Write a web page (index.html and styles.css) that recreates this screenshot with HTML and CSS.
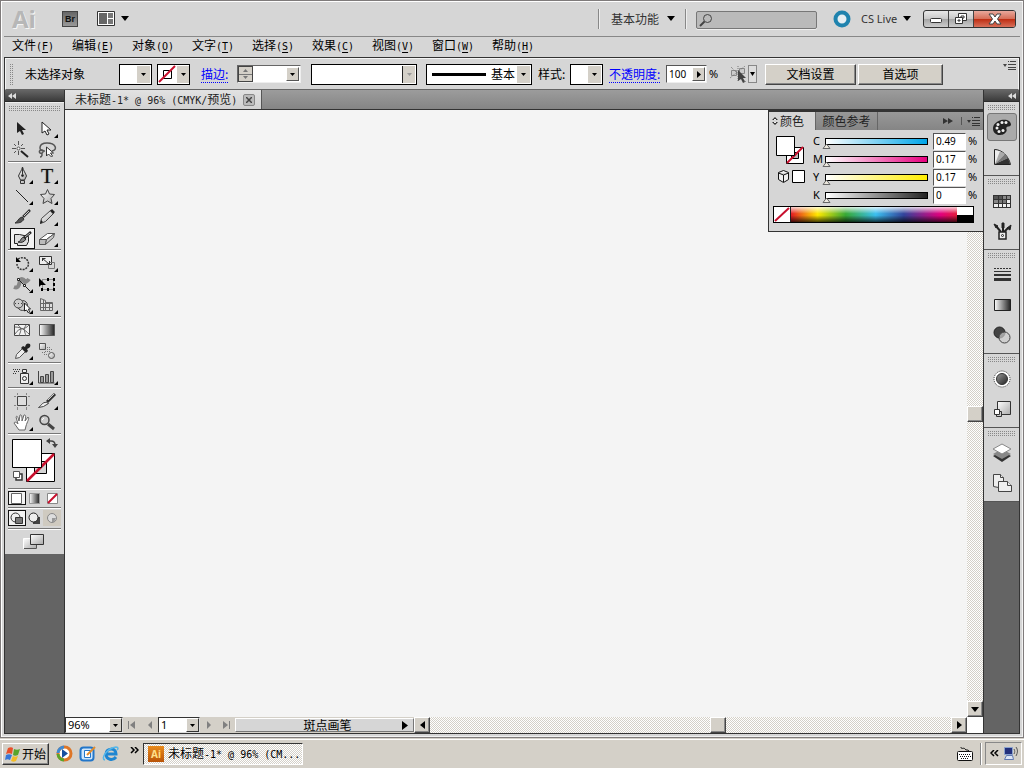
FILE: index.html
```html
<!DOCTYPE html>
<html lang="zh-CN">
<head>
<meta charset="utf-8">
<title>未标题-1* @ 96% (CMYK/预览)</title>
<link rel="stylesheet" href="styles.css">
</head>
<body>
<svg class="defs" aria-hidden="true">
  <defs>
    <linearGradient id="steel" x1="0" y1="0" x2="1" y2="1"><stop offset="0" stop-color="#fff"/><stop offset="1" stop-color="#aaa"/></linearGradient>
    <linearGradient id="dark" x1="0" y1="0" x2="1" y2="1"><stop offset="0" stop-color="#999"/><stop offset="1" stop-color="#222"/></linearGradient>
    <linearGradient id="fade"><stop offset="0" stop-color="#fff"/><stop offset="1" stop-color="#222"/></linearGradient>
    <symbol id="corner" viewBox="0 0 25 21"><path d="M23 15v4h-4z"/></symbol>
    <symbol id="pointer" viewBox="0 0 25 21"><path d="M7 3v11l3-2 2 4 2-1-2-4h4z"/></symbol>
    <symbol id="down" viewBox="0 0 8 5"><path d="M0 0h8L4 5z"/></symbol>
    <symbol id="small" viewBox="0 0 5 3"><path d="M0 0h5L2.500 3z"/></symbol>
    <symbol id="rewind" viewBox="0 0 8 6"><path d="M4 0v6L0 3zM8 0v6L4 3z"/></symbol>
    <symbol id="list" viewBox="0 0 13 9"><path d="M0 3h4L2 6zM5 0h1v1H5zM7 0h6v1H7zM5 3h8v1H5zM5 6h8v1H5zM5 8h8v1H5z"/></symbol>
  </defs>
</svg>
<main class="window">
  <header class="titlebar">
    <span class="logo">Ai</span>
    <button class="bridge">Br</button>
    <button class="plain arrange" aria-label="排列文档"><svg width="18" height="15"><path fill="#fff" stroke="#333" d="M.5.5h17v14H.5z"/><path fill="#666" d="M2 2h8v11H2z"/><path fill="#777" d="M11 2h5v5h-5zM11 8h5v5h-5z"/></svg><svg width="8" height="5"><use href="#down"/></svg></button>
    <span class="spring"></span>
    <i class="rule"></i>
    <button class="plain workspace-name">基本功能 <svg width="8" height="5"><use href="#down"/></svg></button>
    <i class="rule"></i>
    <label class="search"><svg width="14" height="14" fill="none" stroke="#444"><circle cx="8.500" cy="5.500" r="4"/><path stroke-width="2" d="M5.500 8.500L1 13"/></svg><input type="search" aria-label="搜索"></label>
    <button class="plain live"><svg width="18" height="18"><circle cx="9" cy="9" r="6.500" fill="#e6eff3" stroke="#1f83ae" stroke-width="4"/></svg><span>CS Live</span><svg width="8" height="5"><use href="#down"/></svg></button>
    <div class="window-buttons">
      <button aria-label="最小化"><svg width="14" height="10"><rect x="1.500" y="4.500" width="11" height="4" rx="1" fill="#fff" stroke="#333"/></svg></button>
      <button aria-label="还原"><svg width="14" height="12" fill="#fff" stroke="#333"><path d="M4.500.5h8v7h-8z"/><path d="M7 3h3v2H7z"/><path d="M1.500 4.500h7v6h-7z"/><path d="M4 7h2v1H4z"/></svg></button>
      <button class="close" aria-label="关闭"><svg width="14" height="12"><path d="M1 1h4l2 3 2-3h4L9.500 6l3.500 5H9L7 8l-2 3H1l3.500-5z" fill="#fff" stroke="#444"/></svg></button>
    </div>
  </header>
  <nav class="menubar">
    <button>文件<b>(<u>F</u>)</b></button><button>编辑<b>(<u>E</u>)</b></button><button>对象<b>(<u>O</u>)</b></button><button>文字<b>(<u>T</u>)</b></button><button>选择<b>(<u>S</u>)</b></button><button>效果<b>(<u>C</u>)</b></button><button>视图<b>(<u>V</u>)</b></button><button>窗口<b>(<u>W</u>)</b></button><button>帮助<b>(<u>H</u>)</b></button>
  </nav>
  <div class="frame">
    <section class="control">
      <i class="grip-v"></i>
      <span class="selection">未选择对象</span>
      <div class="combo chip"><select aria-label="填色"><option></option></select><span class="arrow"><svg width="5" height="3"><use href="#small"/></svg></span></div>
      <div class="combo chip stroke-chip"><svg width="18" height="18"><path fill="none" stroke="#000" d="M5.500 5.500h8v8h-8z"/><path stroke="#c8102e" stroke-width="2" d="M1 17L17 1"/></svg><select aria-label="描边颜色"><option></option></select><span class="arrow"><svg width="5" height="3"><use href="#small"/></svg></span></div>
      <a class="link" href="#weight">描边:</a>
      <div class="combo weight" id="weight"><span class="spin"><button aria-label="增加"><svg width="5" height="3"><path d="M0 3h5L2.500 0z"/></svg></button><button aria-label="减少"><svg width="5" height="3"><use href="#small"/></svg></button></span><select aria-label="描边粗细"><option></option></select><span class="arrow raised"><svg width="5" height="3"><use href="#small"/></svg></span></div>
      <div class="combo wide off"><select aria-label="宽度配置"><option></option></select><span class="arrow"><svg width="5" height="3"><use href="#small"/></svg></span></div>
      <div class="combo wide brush"><i class="line"></i><select aria-label="画笔定义"><option>基本</option></select><span class="arrow"><svg width="5" height="3"><use href="#small"/></svg></span></div>
      <label class="style-label" for="style">样式:</label>
      <div class="combo chip"><select id="style"><option></option></select><span class="arrow"><svg width="5" height="3"><use href="#small"/></svg></span></div>
      <a class="link opacity-label" href="#opacity">不透明度:</a>
      <div class="combo opacity"><input id="opacity" value="100" aria-label="不透明度"><button class="arrow raised" aria-label="不透明度滑块"><svg width="4" height="7"><path d="M0 0v7l4-3.500z"/></svg></button></div>
      <span class="percent">%</span>
      <button class="plain similar" aria-label="选择类似的对象"><svg width="17" height="17"><path fill="#ccc" stroke="#888" d="M1.500 4.500h5v5h-5zM9.500 2.500h5v5h-5z"/><path stroke="#777" stroke-dasharray="1 1" d="M1 1l15 15M8 0v15M0 12l15-12"/><path fill="#444" d="M8 4v11l3-2 2 4 2-1-2-4h3z"/></svg><span><svg width="5" height="4"><path d="M0 0h5L2.500 4z"/></svg></span></button>
      <button class="push setup">文档设置</button>
      <button class="push">首选项</button>
      <span class="spring"></span>
      <button class="plain flyout" aria-label="面板菜单"><svg width="13" height="9"><use href="#list"/></svg></button>
    </section>
    <div class="work">
      <aside class="tools">
        <button class="dock-head" aria-label="折叠"><svg width="8" height="6"><use href="#rewind"/></svg></button>
        <div class="toolbox">
          <i class="grip"></i>
          <div class="group">
            <button aria-label="选择"><svg fill="#222"><use href="#pointer"/></svg></button>
            <button aria-label="直接选择"><svg><use href="#pointer" fill="#fff" stroke="#222"/><use href="#corner"/></svg></button>
            <button aria-label="魔棒"><svg fill="none" stroke="#555"><path d="M8.500 1v4M8.500 11v4M2 8.500h4M11 8.500h4M4 4l2 2M13 4l-2 2M4 13l2-2"/><circle cx="8.500" cy="8.500" r="1.500" fill="#fff"/><path stroke-width="2" stroke="#222" d="M11 11l7 6"/></svg></button>
            <button aria-label="套索"><svg fill="none" stroke="#555"><path stroke-width="1.500" d="M10 11C3 12 3 3 12 3s11 7 5 8M9 11c-3-2-6 0-4 2 3 1 4-2 2-3M6 13c2 1 1 4-1 4"/><path fill="#fff" stroke="#333" d="M11.500 7v9l2-2 3 3 1-1-2-3h3z"/></svg></button>
          </div>
          <div class="group">
            <button aria-label="钢笔"><svg fill="url(#steel)" stroke="#333"><path d="M12.500 2c-1 4-3 6-4 9l2 4h4l2-4c-1-3-3-5-4-9z"/><path d="M12.500 3v6M10.500 15.500h4v3h-4z"/><circle cx="12.500" cy="10.500" r="1" fill="#222"/><use href="#corner" fill="#000" stroke="none"/></svg></button>
            <button aria-label="文字"><span class="glyph">T</span><svg class="over"><use href="#corner"/></svg></button>
            <button aria-label="直线段"><svg><path stroke="#222" d="M6 4l12 12"/><use href="#corner"/></svg></button>
            <button aria-label="星形"><svg><path fill="url(#steel)" stroke="#444" d="M12.500 3.500l2 4.500 5 .5-3.500 4 1 5-4.500-2.500-4.500 2.500 1-5-3.500-4 5-.5z"/><use href="#corner"/></svg></button>
            <button aria-label="画笔"><svg fill="none" stroke="#333"><path stroke-width="2.500" d="M20 3l-7 7"/><path stroke="#ccc" d="M19 4l-5 5"/><path fill="#555" d="M12 10l2 2c-2 4-6 4-9 4 3-1 3-5 7-6z"/></svg></button>
            <button aria-label="铅笔"><svg><path fill="url(#steel)" stroke="#444" d="M5.500 16.500l1-5 9-8 3 3-8 8z"/><path fill="#222" d="M5 17l1-4 2 2zM15 4l2-2 3 3-2 2z"/><use href="#corner"/></svg></button>
            <button class="chosen" aria-label="斑点画笔"><svg fill="none" stroke="#222"><path fill="#ddd" d="M8.500 5.500h-5v9h3v2h9l2-4v-5z"/><path fill="#888" d="M7 13c3 0 2-4 6-5l2 2c-2 3-4 4-8 3z"/><path stroke-width="2.500" d="M13 9l7-6"/><path stroke="#bbb" d="M14 8l5-4"/></svg></button>
            <button aria-label="橡皮擦"><svg stroke="#555"><path fill="#fff" d="M4.500 11.500l8-6h7l-8 6z"/><path fill="#bbb" d="M4.500 11.500h7l-1 5h-6z"/><path fill="#ccc" d="M11.500 11.500l8-6-1 4-8 7z"/><use href="#corner" fill="#000" stroke="none"/></svg></button>
          </div>
          <div class="group">
            <button aria-label="旋转"><svg><path fill="none" stroke="#333" stroke-width="1.500" stroke-dasharray="2 1" d="M8 6c7-4 12 2 10 7-3 6-11 4-11-2"/><path d="M6 4v5h5z"/><use href="#corner"/></svg></button>
            <button aria-label="比例缩放"><svg fill="#eee" stroke="#333"><path d="M4.500 3.500h12v8h-12z"/><path fill="none" stroke="#777" d="M13.500 9.500h6v6h-6z"/><path d="M7 5l7 6M7.500 8V5.500h3M14.500 8v3h-3"/><use href="#corner" fill="#000" stroke="none"/></svg></button>
            <button aria-label="宽度"><svg fill="none"><path stroke="#888" stroke-width="4" d="M4 13c5 2 5-3 6-6s4-2 4 0 3 1 5-2"/><path stroke="#222" d="M9 6l11 11"/><path fill="#fff" stroke="#222" d="M7.500 4.500h2v2h-2zM13.500 10.500h2v2h-2z"/><use href="#corner" fill="#000"/></svg></button>
            <button aria-label="自由变换"><svg><path fill="none" stroke="#444" stroke-dasharray="1 1" d="M7.500 5.500h11v10h-11z"/><path d="M4 4v9l2-2 5 0zM12 4h2v3h-2zM18 4h2v3h-2zM18 9h2v3h-2zM18 14h2v3h-2zM12 14h2v3h-2zM6 14h2v3H6z"/></svg></button>
            <button aria-label="形状生成器"><svg fill="#ccc" stroke="#444"><circle cx="12.500" cy="10.500" r="5"/><circle cx="8.500" cy="8.500" r="4.500"/><path stroke-dasharray="1 2" d="M5 8.500h9"/><path fill="#fff" stroke="#222" d="M14.500 8v8l2-1 2 3 1-1-1-3h2z"/><use href="#corner" fill="#000" stroke="none"/></svg></button>
            <button aria-label="透视网格"><svg fill="#ddd" stroke="#666"><path d="M5.500 3.500l5 2v10h-5zM8.500 5v10M10.500 7.500h7v8h-7zM5 8.500h12M5 12.500h13M14.500 7v9"/><use href="#corner" fill="#000" stroke="none"/></svg></button>
          </div>
          <div class="group">
            <button aria-label="网格"><svg fill="#f2f2f2" stroke="#444"><path d="M4.500 4.500h15v11h-15z"/><path fill="none" stroke="#666" d="M5 14c5-8 9-3 14-9M5 7c6 0 10 3 14 7M8 5c5 4 2 7 1 11M16 5c-3 5-1 7 0 11"/></svg></button>
            <button aria-label="渐变"><svg><path fill="url(#fade)" stroke="#555" d="M4.500 4.500h15v11h-15z"/></svg></button>
            <button aria-label="吸管"><svg><path stroke="#555" fill="#eee" d="M5.500 17.500l1-4 6-6 3 3-6 6z"/><path fill="#222" d="M11 7l2-2 2 1c1-4 3-4 5-3 1 2 0 4-3 5l1 2-2 2z"/><use href="#corner"/></svg></button>
            <button aria-label="混合"><svg fill="url(#steel)" stroke="#555"><path d="M4.500 2.500h6v6h-6z"/><circle cx="16.500" cy="14.500" r="3"/><path stroke="#777" stroke-dasharray="1 1" d="M10 10.500h6M12 6.500h3M12 8.500h5M7 11.500h4M9 13.500h4"/></svg></button>
          </div>
          <div class="group">
            <button aria-label="符号喷枪"><svg fill="#eee" stroke="#333"><path stroke-dasharray="1 1" d="M3 3.500h7M4 5.500h6M3 7.500h4"/><path d="M12.500 3.500h4v3h-4zM10.500 7.500h8v10h-8z"/><circle cx="14.500" cy="12.500" r="2"/><use href="#corner" fill="#000" stroke="none"/></svg></button>
            <button aria-label="柱形图"><svg fill="#999" stroke="#444"><path fill="none" d="M3.500 5v12h16"/><path d="M5.500 10.500h3v6h-3zM10.500 8.500h3v8h-3zM15.500 5.500h3v11h-3z"/><use href="#corner" fill="#000" stroke="none"/></svg></button>
          </div>
          <div class="group">
            <button aria-label="画板"><svg fill="#ddd" stroke="#444"><path d="M7.500 5.500h9v9h-9z"/><path stroke="#888" d="M7.500 2v2M16.500 2v2M7.500 16v3M16.500 16v3M4 5.500h2M18 5.500h2M4 14.500h2M18 14.500h2"/></svg></button>
            <button aria-label="切片"><svg><path fill="#eee" stroke="#444" d="M3.500 16.500c2-1 4-6 8-5l2 1-5 3z"/><path stroke="#333" stroke-width="3" d="M12 11l8-8"/><path stroke="#ccc" d="M13 9l6-6"/><use href="#corner"/></svg></button>
            <button aria-label="抓手"><svg><path fill="#fff" stroke="#666" d="M9 18l-5-7c1-2 3 0 4 1L6 5c1-2 2 0 3 4l1-6c2-1 2 2 2 6l2-6c2-1 2 3 1 6l3-4c2 1-1 5-2 9l-1 4z"/><use href="#corner"/></svg></button>
            <button aria-label="缩放"><svg fill="#ccc" stroke="#444"><path stroke-width="3" d="M13 12l6 5"/><circle cx="9.500" cy="8" r="4.500" stroke-width="1.500"/><path stroke="#fff" d="M7 8l2-2"/></svg></button>
          </div>
          <div class="paint">
            <svg width="52" height="50"><path fill="#fff" stroke="#000" d="M18.500 16.500h28v28h-28z"/><path fill="#d4d4d4" stroke="#000" d="M26.500 24.500h12v12h-12z"/><path stroke="#c8102e" stroke-width="2.500" d="M19 44L46 17"/><path fill="#fff" stroke="#000" d="M4.500 2.500h29v28h-29z"/><path fill="none" stroke="#444" stroke-width="1.500" d="M41 4h2c3 0 4 2 4 4"/><path fill="#444" d="M42 1v6l-4-3zM44 7h6l-3 4z"/><path fill="#fff" stroke="#333" stroke-width="1.500" d="M8 37h6v6H8z"/><path fill="#fff" stroke="#555" d="M5.500 34.500h6v6h-6z"/></svg>
          </div>
          <div class="modes">
            <button class="chosen" aria-label="颜色"><svg width="11" height="11"><path fill="#fff" stroke="#666" d="M.5.5h10v10H.5z"/></svg></button>
            <button aria-label="渐变"><svg width="11" height="11"><path fill="url(#fade)" stroke="#999" d="M.5.5h10v10H.5z"/></svg></button>
            <button aria-label="无"><svg width="11" height="11"><path fill="#fff" stroke="#888" d="M.5.5h10v10H.5z"/><path stroke="#c8102e" stroke-width="2" d="M1 10l9-9"/></svg></button>
          </div>
          <div class="modes draw">
            <button class="chosen" aria-label="正常绘图"><svg width="13" height="13"><circle cx="5.500" cy="5.500" r="4.500" fill="#eee" stroke="#333"/><path fill="#777" stroke="#333" d="M5.500 5.500h7v6h-7z"/></svg></button>
            <button aria-label="背面绘图"><svg width="13" height="13"><path fill="#444" d="M5 5h7v7H5z"/><circle cx="5.500" cy="5.500" r="4.500" fill="#eee" stroke="#222"/></svg></button>
            <button class="tan" aria-label="内部绘图" disabled><svg width="13" height="13"><circle cx="6" cy="6" r="4.500" fill="#ddd" stroke="#888"/><path fill="#999" d="M6 6h4l-2 4H6z"/></svg></button>
          </div>
          <button class="plain screen" aria-label="更改屏幕模式"><svg width="22" height="16"><path fill="url(#steel)" stroke="#fff" d="M.5 4.500h13v10H.5z"/><path fill="none" stroke="#555" d="M1 14.500h12.500V11"/><path fill="url(#steel)" stroke="#333" d="M7.500.5h13v10h-13z"/></svg></button>
        </div>
      </aside>
      <section class="document">
        <div class="tabs"><div class="tab"><span>未标题<b>-1* @ 96% (CMYK/</b>预览<b>)</b></span><button aria-label="关闭文档"><svg width="6" height="6" stroke="#444" stroke-width="1.500"><path d="M0 0l6 6M6 0L0 6"/></svg></button></div></div>
        <div class="view">
          <div class="canvas"></div>
          <div class="vscroll"><span class="before"></span><button class="knob" aria-label="垂直滚动"></button><span class="after"></span><button class="knob" aria-label="向下"><svg width="8" height="5"><use href="#down"/></svg></button></div>
        </div>
        <div class="status">
          <div class="combo zoom"><select aria-label="缩放"><option>96%</option></select><span class="arrow raised"><svg width="5" height="3"><use href="#small"/></svg></span></div>
          <button class="plain step first" aria-label="首项"><svg width="8" height="8"><path d="M0 0h1v8H0zM7 0v8L2 4z"/></svg></button>
          <button class="plain step" aria-label="上一项"><svg width="8" height="8"><path d="M6 0v8L2 4z"/></svg></button>
          <div class="combo page"><select aria-label="画板导航"><option>1</option></select><span class="arrow raised"><svg width="5" height="3"><use href="#small"/></svg></span></div>
          <button class="plain step" aria-label="下一项"><svg width="8" height="8"><path d="M2 0v8l4-4z"/></svg></button>
          <button class="plain step last" aria-label="末项"><svg width="8" height="8"><path d="M1 0v8l5-4zM7 0h1v8H7z"/></svg></button>
          <button class="tool-status"><span>斑点画笔</span><svg width="6" height="9"><path d="M0 0v9l6-4.500z"/></svg></button>
          <div class="hscroll"><button class="knob" aria-label="向左"><svg width="5" height="8"><path d="M5 0v8L0 4z"/></svg></button><span class="before"></span><button class="knob" aria-label="水平滚动"></button><span class="after"></span><button class="knob" aria-label="向右"><svg width="5" height="8"><path d="M0 0v8l5-4z"/></svg></button></div>
          <i class="size-box"></i>
        </div>
        <section class="color-panel">
          <div class="panel-tabs">
            <button class="active"><svg width="6" height="8"><path d="M3 0l3 3H0zM0 5h6L3 8z"/><path fill="#eee" d="M2 2h2v1H2zM2 5h2v1H2z"/></svg>颜色</button><button>颜色参考</button>
            <span class="spring"></span>
            <svg width="10" height="6"><path d="M0 0v6l5-3zM5 0v6l5-3z"/></svg><i></i><svg width="13" height="9"><use href="#list"/></svg>
          </div>
          <div class="mixer">
            <div class="proxy">
              <svg width="30" height="50"><path fill="#fff" stroke="#000" d="M10.500 11.500h17v16h-17z"/><path fill="#bbb" stroke="#000" d="M15.500 16.500h7v6h-7z"/><path stroke="#c8102e" stroke-width="2" d="M11 27L27 11"/><path fill="#fff" stroke="#000" d="M.5.500h18v19H.5z"/><path fill="#eee" stroke="#111" d="M7.500 34.500l5 2v7l-5 3-5-3v-7zM2.500 37l5 2 5-2M7.500 39v7"/><path fill="#fff" stroke="#000" d="M16.500 34.500h12v12h-12z"/></svg>
            </div>
            <div class="channels">
              <div class="channel cyan"><label for="c">C</label><input type="range" aria-label="青色" value="0"><input id="c" value="0.49"><span>%</span></div>
              <div class="channel magenta"><label for="m">M</label><input type="range" aria-label="洋红" value="0"><input id="m" value="0.17"><span>%</span></div>
              <div class="channel yellow"><label for="y">Y</label><input type="range" aria-label="黄色" value="0"><input id="y" value="0.17"><span>%</span></div>
              <div class="channel black"><label for="k">K</label><input type="range" aria-label="黑色" value="0"><input id="k" value="0"><span>%</span></div>
            </div>
          </div>
          <div class="spectrum"><svg width="16" height="15"><path fill="#fff" d="M0 0h16v15H0z"/><path stroke="#c8102e" stroke-width="2" d="M1 14L15 1"/></svg><span class="hues"></span><span class="ends"></span></div>
        </section>
      </section>
      <aside class="dock">
        <button class="dock-head" aria-label="展开面板"><svg width="8" height="6"><use href="#rewind"/></svg></button>
        <div class="dock-group"><i class="grip"></i>
          <button class="on" aria-label="颜色"><svg><path fill="#222" d="M2 13c0-5 3-7 8-9 5-1 10 0 10 5-1 2-3 1-4 2-2 1 1 3-1 5-2 3-5 3-8 3-3-1-5-3-5-6z"/><g fill="#eee"><circle cx="6" cy="12" r="1.500"/><circle cx="7" cy="8.500" r="1.500"/><circle cx="11" cy="6.500" r="1.500"/><circle cx="15" cy="6.500" r="1.500"/><circle cx="8" cy="15.500" r="1.500"/><circle cx="12" cy="14.500" r="1.500"/></g></svg></button>
          <button aria-label="颜色参考"><svg><path fill="#eee" stroke="#222" d="M3.500 18.500v-15c7 0 14 6 16 15z"/><path fill="#aaa" d="M4 18L9 5l5 3z"/><path fill="#777" d="M4 18L14 8l3 4z"/><path fill="#333" d="M4 18l13-6 2 6z"/></svg></button></div>
        <div class="dock-group"><i class="grip"></i>
          <button aria-label="色板"><svg><path fill="#333" d="M2 5h18v13H2z"/><path fill="#555" d="M3 6h4v3H3zM8 6h3v3H8z"/><path fill="#888" d="M12 6h3v3h-3zM16 6h3v3h-3zM3 10h4v3H3z"/><path fill="#777" d="M8 10h3v3H8zM12 10h3v3h-3z"/><path fill="#eee" d="M16 10h3v3h-3zM3 14h4v3H3zM8 14h3v3H8zM12 14h3v3h-3zM16 14h3v3h-3z"/></svg></button>
          <button aria-label="画笔"><svg fill="none" stroke="#222"><path stroke-width="2" d="M10 12L5 6M12 12V5M13 12l4-4"/><path fill="#222" d="M3 4l4 2-2 2zM11 3h2v5h-2zM16 8l4-3-1 5z"/><path fill="#eee" stroke-width="1.500" d="M8 12h7v7H8z"/><circle cx="11.500" cy="15.500" r="1"/></svg></button></div>
        <div class="dock-group"><i class="grip"></i>
          <button aria-label="描边"><svg fill="#333"><path stroke="#333" stroke-dasharray="2 1" d="M3 4.500h17"/><path d="M3 7h17v1H3zM3 10h17v2H3zM3 14h17v3H3z"/></svg></button>
          <button aria-label="渐变"><svg><path fill="url(#fade)" stroke="#222" d="M3.500 5.500h16v11h-16z"/></svg></button>
          <button aria-label="透明度"><svg><circle cx="8.500" cy="8.500" r="5.500" fill="#444" stroke="#222"/><circle cx="13.500" cy="13.500" r="5.500" fill="#ccc" fill-opacity=".7" stroke="#444"/></svg></button></div>
        <div class="dock-group"><i class="grip"></i>
          <button aria-label="外观"><svg><circle cx="11" cy="11" r="8" fill="#fff" stroke="#333" stroke-dasharray="1 1"/><circle cx="11" cy="11" r="5.500" fill="url(#dark)" stroke="#333"/></svg></button>
          <button aria-label="图形样式"><svg stroke="#333"><path fill="url(#steel)" d="M6.500 3.500h13v13h-13z"/><path fill="#ccc" d="M5.500 13.500h5v5h-5z"/><path fill="#fff" d="M3.500 11.500h5v5h-5z"/></svg></button></div>
        <div class="dock-group"><i class="grip"></i>
          <button aria-label="图层"><svg><path fill="#333" d="M11 9l9 5-9 6-9-6z"/><path fill="#888" d="M11 7l9 5-9 5-9-5z"/><path fill="#fff" stroke="#888" d="M11 2l9 5-9 5-9-5z"/></svg></button>
          <button aria-label="画板"><svg fill="#eee" stroke="#444"><path d="M2.500 2.500h7l3 3v11l-10-2z"/><path d="M9.500 2.500v3h3"/><path d="M7.500 9.500h9l4 4v6h-13z"/><path d="M16.500 9.500v4h4"/></svg></button></div>
      </aside>
    </div>
  </div>
</main>
<footer class="taskbar">
  <button class="start"><svg width="16" height="16"><path fill="#e8502a" d="M3 2c2-1 4-1 5 0L7 8C5 7 3 7 1 8z"/><path fill="#59a52c" d="M9 3c2 1 4 1 6 0l-2 6c-2 1-4 1-5 0z"/><path fill="#3677d8" d="M1 9c2-1 4-1 6 0l-2 5c-2-1-3-1-5 0z"/><path fill="#f4bc24" d="M8 10c1 1 3 1 5 0l-2 5c-2 1-3 1-5 0z"/></svg>开始</button>
  <div class="quick">
    <button aria-label="媒体播放器"><svg width="17" height="17"><circle cx="8.500" cy="8.500" r="6.500" fill="#fff" stroke="#de7627" stroke-width="3"/><path fill="none" stroke="#3d8ad4" stroke-width="3" d="M2 8a6.500 6.500 0 0 1 6-6"/><path fill="none" stroke="#59a52c" stroke-width="3" d="M2 9a6.500 6.500 0 0 0 6 6"/><path fill="#174f9e" d="M6 4v9l6-4.500z"/></svg></button>
    <button aria-label="显示桌面"><svg width="17" height="17"><rect x="1.500" y="2.500" width="13" height="13" rx="3" fill="#cfe6fb" stroke="#2276c9" stroke-width="2"/><path fill="#fff" stroke="#2276c9" d="M5.500 5.500h6v7h-6z"/><path stroke="#e08c2e" stroke-width="2" d="M8 10l8-8"/></svg></button>
    <button aria-label="浏览器"><svg width="17" height="17"><path fill="none" stroke="#1f86d1" stroke-width="3" d="M14 12c-3 4-10 3-10-3s10-7 10 0H5"/><path fill="none" stroke="#55b7ea" stroke-width="1.500" d="M3 15c-5-1 2-12 11-13 3 0 2 2 1 3"/></svg></button>
  </div>
  <button class="plain more" aria-label="更多"><svg width="9" height="7" fill="none" stroke="#000" stroke-width="1.500"><path d="M1 0l3 3-3 3M5 0l3 3-3 3"/></svg></button>
  <button class="task"><span class="app">Ai</span><span>未标题<b>-1* @ 96% (CM...</b></span></button>
  <span class="spring"></span>
  <svg width="16" height="14" fill="#fff" stroke="#111"><path fill="none" d="M4 0c0 3 3 0 4 2s3 0 4 2"/><rect x=".5" y="4.500" width="15" height="9" rx="1"/><path stroke-dasharray="1 1" d="M2 7.500h12M3 9.500h11M4 11.500h8"/></svg>
  <i class="tray-rule"></i>
  <div class="tray"><svg width="9" height="7" fill="none" stroke="#000" stroke-width="1.500"><path d="M4 0L1 3l3 3M8 0L5 3l3 3"/></svg><svg width="16" height="15"><path fill="#23307c" stroke="#8ba3cf" d="M1.500 1.500h8v7h-8z"/><path fill="#dce5f5" stroke="#6078b0" d="M3.500 9.500h6l1 4h-9z"/><path fill="none" stroke="#555" d="M11 3c1 2 1 3 0 5M13 1c2 3 2 5 0 9"/></svg></div>
</footer>
</body>
</html>
```
FILE: styles.css
```css
* { box-sizing: border-box; }
html { height: 100%; }
body {
  margin: 0;
  min-height: 100vh;
  display: flex;
  flex-direction: column;
  background: #d4d0c8;
  color: #000;
  font: 12px/16px "Noto Sans CJK SC", sans-serif;
}
.defs { position: absolute; width: 0; height: 0; }
svg { display: block; flex: none; }
button, input, select { font: inherit; color: inherit; padding: 0; margin: 0; border: 0; border-radius: 0; background: none; min-width: 0; }
select { appearance: none; flex: 1; outline: 0; }
b { font: 10px/16px "DejaVu Sans Mono", monospace; white-space: pre; }
i { display: block; flex: none; }
.spring { flex: 1; }
.plain { display: flex; align-items: center; }

.window {
  flex: 1;
  display: flex;
  flex-direction: column;
  padding: 0 3px 3px;
  border: 1px solid #7f7b7b;
  background: #d6d6d6;
  box-shadow: inset 1px 1px #fff, inset -1px -1px #f2f2f2;
}
.titlebar {
  display: flex;
  align-items: center;
  height: 36px;
  border-bottom: 1px solid #888;
  color: #333;
}
.logo {
  width: 49px;
  margin-left: 8px;
  font: bold 24px/32px "Open Sans", sans-serif;
  color: #b7b7b7;
  text-shadow: 1px 1px #f4f4f4;
}
.bridge {
  width: 16px;
  height: 16px;
  margin: 0 19px 0 1px;
  border: 1px solid #444;
  background: linear-gradient(#666, #999);
  color: #111;
  font: bold 9px/12px "Liberation Sans", sans-serif;
}
.arrange { gap: 6px; }
.rule { width: 1px; height: 20px; background: #888; box-shadow: 1px 0 #eee; }
.workspace-name { gap: 8px; margin: 0 10px 0 12px; }
.search {
  display: flex;
  align-items: center;
  width: 121px;
  height: 18px;
  margin: 2px 16px 0 10px;
  padding-left: 2px;
  border: 1px solid #777;
  border-radius: 2px;
  background: #bababa;
  box-shadow: 0 1px #eee;
}
.search input { flex: 1; outline: 0; }
.live { font-family: "Noto Sans", sans-serif; gap: 6px; margin-right: 12px; }
.live span { width: 36px; margin-left: 4px; white-space: nowrap; font-size: 11px; text-align: left; }
.window-buttons {
  display: flex;
  height: 18px;
  margin-right: 4px;
  border: 1px solid #333;
  border-radius: 3px;
  overflow: hidden;
  background: linear-gradient(#e8e8e8, #c9c9c9 48%, #a4a4a4 50%, #ccc);
}
.window-buttons button { display: grid; place-items: center; width: 25px; border-right: 1px solid #444; }
.window-buttons .close { width: 41px; border: 0; background: linear-gradient(#e8a99c, #d56f59 48%, #bd2c10 50%, #d8705a); }
.menubar { display: flex; gap: 18px; height: 20px; padding-left: 8px; }
.menubar button { display: flex; align-items: baseline; width: 42px; line-height: 16px; white-space: nowrap; }
.menubar u { text-underline-offset: 2px; }

.frame { flex: 1; display: flex; flex-direction: column; border: 1px solid #333; }
.control {
  display: flex;
  align-items: center;
  height: 32px;
  padding: 0 2px 0 4px;
  border: 1px solid #f4f4f4;
  border-bottom: 1px solid #666;
  white-space: nowrap;
}
.grip-v { width: 3px; height: 21px; background: conic-gradient(from 270deg, #888 25%, transparent 0) 0 0 / 2px 2px; }
.selection { width: 106px; padding-left: 12px; }
.combo { display: flex; align-items: stretch; height: 21px; border: 1px solid #000; background: #fff; overflow: hidden; }
.arrow { display: grid; place-items: center; width: 13px; flex: none; background: #d4d0c8; margin: 1px; }
.raised { border: 1px solid; border-color: #fff #555 #555 #fff; }
.chip { width: 33px; margin-right: 5px; }
.stroke-chip { margin-right: 11px; }
.link { width: 28px; color: #00f; text-decoration: underline dotted; text-underline-offset: 3px; }
.weight { width: 64px; height: 18px; margin: 0 10px 0 8px; border-color: #666 #eee #eee #666; }
.spin { display: grid; width: 15px; background: #d4d0c8; border: 1px solid #444; }
.spin button { display: grid; place-items: center; fill: #777; }
.spin button + button { border-top: 1px solid #777; }
.wide { width: 106px; margin-right: 9px; }
.off .arrow { fill: #999; border-left: 1px solid #222; }
.brush { margin-right: 6px; }
.brush .line { width: 54px; height: 3px; margin: 8px 5px; background: #000; }
.style-label { width: 32px; }
.opacity-label { width: 52px; margin: 0 5px 0 1px; }
.opacity { width: 41px; height: 18px; border-color: #555 #eee #eee #555; font: 10px/14px "Noto Sans", sans-serif; }
.opacity input { flex: 1; width: 20px; padding-left: 2px; }
.percent { width: 23px; padding-left: 2px; font: 11px/16px "Noto Sans", sans-serif; }
.similar { gap: 1px; margin-right: 8px; }
.similar span { display: grid; place-items: center; width: 9px; height: 18px; border: 1px solid #888; background: #ddd; }
.push {
  width: 85px;
  height: 21px;
  border: 1px solid;
  border-color: #fff #444 #444 #fff;
  box-shadow: inset -1px -1px #888;
  background: #d4d0c8;
}
.setup { width: 91px; margin-right: 2px; }
.flyout { align-self: flex-start; margin-top: 2px; fill: #444; }

.work { flex: 1; display: flex; }
.tools, .dock { display: flex; flex-direction: column; flex: none; background: #646464; }
.tools { width: 60px; border-right: 1px solid #333; }
.dock-head {
  display: flex;
  align-items: center;
  height: 12px;
  flex: none;
  padding: 0 3px;
  background: linear-gradient(#666, #3b3b3b);
  border-bottom: 1px solid #2b2b2b;
  fill: #ddd;
}
.toolbox { display: flex; flex-direction: column; padding: 0 3px; background: #d6d6d6; border-top: 1px solid #eee; }
.grip { height: 5px; background: conic-gradient(from 270deg, #888 25%, transparent 0) 0 0 / 2px 2px; }
.toolbox .grip { margin: 3px 1px 8px; }
.group {
  display: grid;
  grid-template-columns: 25px 25px;
  grid-auto-rows: 21px;
  justify-content: center;
  margin-bottom: 2px;
  padding-bottom: 1px;
  background: linear-gradient(#777, #777) 0 100% / 100% 1px no-repeat;
  border-bottom: 1px solid #fff;
  background-origin: padding-box;
}
.group button { position: relative; display: grid; place-items: center; }
.group svg { width: 25px; height: 21px; }
.group .over { position: absolute; inset: 0; }
.glyph { font: 20px/20px "Liberation Serif", serif; color: #111; text-shadow: 0 0 1px #555; }
.chosen { background: #f2f2f2; border: 1px solid #111; }
.group .chosen svg { width: 23px; height: 19px; }
.paint { height: 52px; border-bottom: 1px solid #777; }
.modes { display: flex; height: 19px; padding: 1px 0 2px; border-top: 1px solid #fff; border-bottom: 1px solid #777; }
.modes button { display: grid; place-items: center; width: 18px; }
.draw { height: 21px; }
.tan { background: #cfcac0; }
.screen { height: 25px; padding: 0 15px; border-top: 1px solid #fff; }

.document { position: relative; flex: 1; min-width: 0; display: flex; flex-direction: column; }
.tabs { display: flex; height: 20px; background: linear-gradient(#9c9c9c, #858585); border-bottom: 1px solid #333; }
.tab {
  display: flex;
  align-items: center;
  gap: 6px;
  width: 197px;
  padding-left: 10px;
  background: linear-gradient(#e2e2e2, #d2d2d2);
  border-right: 1px solid #555;
  color: #222;
  white-space: nowrap;
}
.tab button { display: grid; place-items: center; width: 12px; height: 12px; border: 1px solid #888; border-radius: 2px; background: #bbb; }
.view { flex: 1; display: flex; }
.canvas { flex: 1; background: #f4f4f4; }
.vscroll, .hscroll { display: flex; background: repeating-conic-gradient(#d4d0c8 0 25%, #fff 0 50%) 0 0 / 2px 2px; }
.vscroll { width: 16px; flex-direction: column; }
.hscroll { flex: 1; }
.vscroll .before { flex: 296; }
.vscroll .after { flex: 279; }
.hscroll .before { flex: 280; }
.hscroll .after { flex: 225; }
.knob {
  display: grid;
  place-items: center;
  width: 16px;
  height: 16px;
  flex: none;
  background: #d4d0c8;
  border: 1px solid;
  border-color: #fff #444 #444 #fff;
  box-shadow: inset -1px -1px #888;
}
.status { display: flex; height: 16px; background: #d4d0c8; }
.status .combo { height: 16px; border-color: #333 #ddd #ddd #333; font: 11px/14px "Noto Sans", sans-serif; }
.status select { padding-left: 2px; }
.status .arrow { margin: 0; border-color: #fff #333 #333 #fff; }
.zoom { width: 58px; }
.page { width: 42px; }
.step { width: 17px; justify-content: center; fill: #808080; }
.first { width: 18px; }
.last { width: 18px; }
.tool-status {
  display: flex;
  align-items: center;
  width: 179px;
  margin: 1px 0;
  padding: 0 5px 0 17px;
  border: 1px solid;
  border-color: #fff #777 #777 #fff;
  background: #d6d6d6;
  line-height: 12px;
}
.tool-status span { flex: 1; }
.size-box { width: 16px; background: #fff; }

.color-panel {
  position: absolute;
  top: 20px;
  right: 0;
  width: 215px;
  border: 1px solid #333;
  border-top-width: 2px;
  border-right: 0;
  background: #d6d6d6;
  font: 11px/16px "Noto Sans", sans-serif;
}
.panel-tabs { display: flex; align-items: center; height: 18px; padding-right: 3px; gap: 5px; background: linear-gradient(#989898, #858585); fill: #333; }
.panel-tabs button { width: 62px; height: 18px; margin-left: -5px; border-right: 1px solid #666; font: 12px/16px "Noto Sans CJK SC", sans-serif; color: #222; white-space: nowrap; }
.panel-tabs .active { display: flex; align-items: center; gap: 2px; width: 47px; margin: 0; padding-left: 3px; background: #d6d6d6; }
.panel-tabs i { width: 1px; height: 8px; background: #555; margin-left: 3px; }
.mixer { display: flex; padding: 2px 4px 0 7px; }
.proxy { width: 37px; padding-top: 4px; }
.channels { flex: 1; }
.channel { display: flex; align-items: center; height: 18px; }
.channel label { width: 12px; }
.channel input { width: 33px; height: 17px; padding-left: 2px; border: 1px solid; border-color: #555 #fff #fff #555; background: #fff; font-size: 10px; }
.channel input[type="range"] {
  appearance: none;
  flex: 1;
  height: 18px;
  margin-right: 5px;
  padding: 0;
  border: 0;
  background: none;
}
.channel input[type="range"]::-webkit-slider-runnable-track { height: 7px; border: 1px solid #000; background: linear-gradient(90deg, #fff, var(--ink)); }
.channel input[type="range"]::-webkit-slider-thumb {
  appearance: none;
  width: 9px;
  height: 6px;
  margin: 4px 0 0 -4px;
  background: url("data:image/svg+xml,%3Csvg xmlns='http://www.w3.org/2000/svg' width='9' height='6'%3E%3Cpath d='M4.500 1L8 5.500H1z' fill='%23ece8de' stroke='%23666'/%3E%3C/svg%3E") no-repeat;
}
.channel span { width: 13px; padding-left: 2px; }
.cyan { --ink: #00a5e8; }
.magenta { --ink: #e6007e; }
.yellow { --ink: #ffed00; }
.black { --ink: #222; }
.spectrum { display: flex; height: 17px; margin: 2px 9px 8px 4px; border: 1px solid #000; }
.hues {
  flex: 1;
  border-left: 1px solid #222;
  background: linear-gradient(#fffc 0, #fff0 45%, #0000 55%, #000b), linear-gradient(90deg, #e31b23, #ffe800 16%, #37a935 33%, #3bbfef 51%, #32439a 68%, #e2007d 90%, #e31b3b);
}
.ends { width: 16px; background: linear-gradient(#fff 50%, #000 50%); }

.dock { width: 36px; border-left: 1px solid #333; }
.dock .dock-head { justify-content: flex-end; }
.dock-group {
  display: grid;
  grid-auto-rows: 30px;
  grid-template-rows: 10px;
  padding: 0 2px 3px 3px;
  border-bottom: 1px solid #555;
  background: #d6d6d6;
}
.dock-group .grip { margin: 3px 1px 0; height: 5px; }
.dock-group button { display: grid; place-items: center; margin: 1px 0; }
.dock-group svg { width: 22px; height: 22px; }
.dock-group .on { border: 1px solid #777; border-radius: 3px; background: #aaa; }

.taskbar { display: flex; align-items: center; height: 30px; padding: 0 2px; border-top: 1px solid #d4d0c8; box-shadow: inset 0 1px #fff; }
.start {
  display: flex;
  align-items: center;
  gap: 1px;
  width: 47px;
  height: 22px;
  padding-left: 2px;
  border: 1px solid;
  border-color: #fff #333 #333 #fff;
  box-shadow: inset -1px -1px #888;
  white-space: nowrap;
}
.quick { display: flex; gap: 6px; margin-left: 7px; }
.more { align-self: flex-start; margin: 8px 4px 0 11px; }
.task {
  display: flex;
  align-items: center;
  gap: 4px;
  width: 160px;
  height: 22px;
  padding-left: 4px;
  border: 1px solid;
  border-color: #333 #fff #fff #333;
  background: repeating-conic-gradient(#d4d0c8 0 25%, #fff 0 50%) 0 0 / 2px 2px;
  white-space: nowrap;
}
.app { width: 16px; height: 16px; background: linear-gradient(#e98b1c, #b95408); color: #ffe08a; font: bold 10px/16px "Noto Sans", sans-serif; }
.tray-rule { width: 2px; height: 22px; margin: 0 3px 0 7px; border-left: 1px solid #888; background: #fff; }
.tray { display: flex; align-items: center; gap: 4px; width: 37px; height: 23px; padding-left: 4px; border: 1px solid; border-color: #888 #fff #fff #888; }
```
